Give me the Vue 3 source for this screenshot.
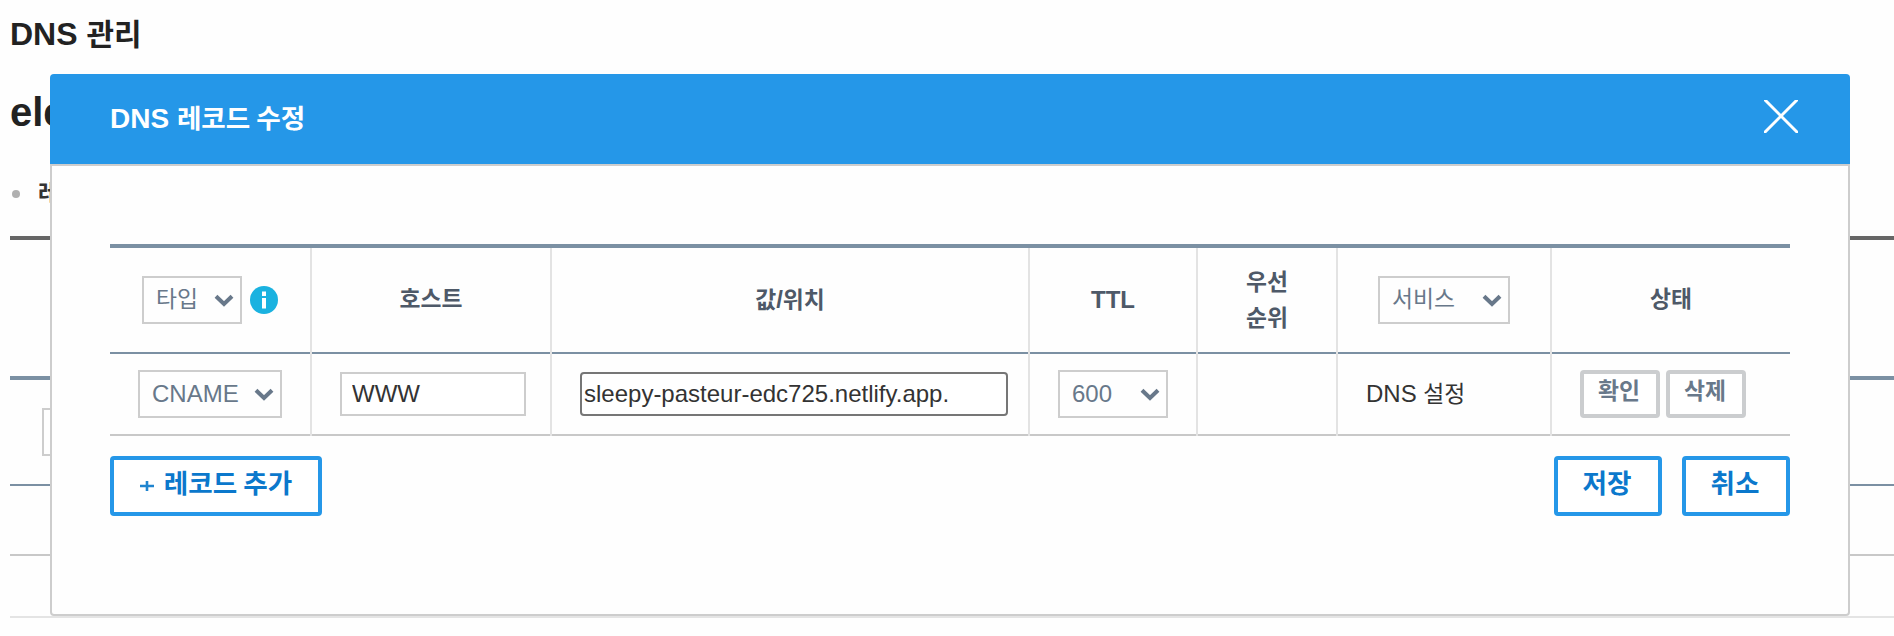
<script setup>
import { ref } from 'vue'

const host = ref('WWW')
const value = ref('sleepy-pasteur-edc725.netlify.app.')
</script>

<template>
  <div class="page">
    <div class="backdrop">
      <h1 class="page-title">DNS <span class="ko">관리</span></h1>
      <h2 class="domain">ele</h2>
      <p class="bullet"><i class="dot"></i><span class="ko">레</span></p>
      <div class="bg-head"></div>
      <div class="bg-filter"><span class="bg-box"></span></div>
      <div class="bg-row"></div>
      <div class="bg-row last"></div>
    </div>

    <section class="modal">
      <header class="modal-head">
        <h3>DNS <span class="ko">레코드 수정</span></h3>
        <svg class="close" width="34" height="33" viewBox="0 0 34 33">
          <path d="M0 -1L34 33M34 -1L0 33" stroke="#fff" stroke-width="3" fill="none" />
        </svg>
      </header>
      <div class="modal-body">
        <div class="table">
          <div class="row head">
            <div class="cell type">
              <div class="select s-type"><span class="ko">타입</span>
                <svg width="20" height="14" viewBox="0 0 20 14"><path d="M2 2.2L10 10L18 2.2" /></svg>
              </div>
              <svg class="info" width="28" height="28" viewBox="0 0 28 28">
                <circle cx="14" cy="14" r="14" fill="#1ab2e0" />
                <rect x="12" y="5.5" width="4" height="4.5" fill="#fff" />
                <rect x="12" y="12" width="4" height="10.5" fill="#fff" />
              </svg>
            </div>
            <div class="cell raised"><span class="ko">호스트</span></div>
            <div class="cell"><span><span class="ko">값</span>/<span class="ko">위치</span></span></div>
            <div class="cell">TTL</div>
            <div class="cell raised"><span class="ko two">우선<br />순위</span></div>
            <div class="cell">
              <div class="select s-service"><span class="ko">서비스</span>
                <svg width="20" height="14" viewBox="0 0 20 14"><path d="M2 2.2L10 10L18 2.2" /></svg>
              </div>
            </div>
            <div class="cell raised"><span class="ko">상태</span></div>
          </div>
          <div class="row body">
            <div class="cell">
              <div class="select s-record latin">CNAME
                <svg width="20" height="14" viewBox="0 0 20 14"><path d="M2 2.2L10 10L18 2.2" /></svg>
              </div>
            </div>
            <div class="cell field"><input v-model="host" class="in-host" /></div>
            <div class="cell field wide"><input v-model="value" class="in-value" /></div>
            <div class="cell">
              <div class="select s-ttl latin">600
                <svg width="20" height="14" viewBox="0 0 20 14"><path d="M2 2.2L10 10L18 2.2" /></svg>
              </div>
            </div>
            <div class="cell"></div>
            <div class="cell service"><span>DNS <span class="ko">설정</span></span></div>
            <div class="cell state">
              <button class="small"><span class="ko">확인</span></button>
              <button class="small"><span class="ko">삭제</span></button>
            </div>
          </div>
        </div>
        <div class="actions">
          <button class="big add">
            <svg width="14" height="11" viewBox="0 0 14 11"><path d="M0 5H14M7 0V10" stroke="#1f84cf" stroke-width="2.6" /></svg>
            <span class="ko">레코드 추가</span>
          </button>
          <button class="big"><span class="ko">저장</span></button>
          <button class="big"><span class="ko">취소</span></button>
        </div>
      </div>
    </section>
  </div>
</template>

<style>
body {
  background: #fefefe;
}
</style>

<style scoped>
.page {
  position: relative;
  height: 636px;
  overflow: hidden;
  background: #fefefe;
  font-family: "Liberation Sans", "Noto Sans CJK KR", sans-serif;
  font-size: 24px;
  color: #333;
}
.page * {
  box-sizing: border-box;
}
.ko {
  font-family: "Noto Sans CJK KR", sans-serif;
  font-size: 0.95em;
  line-height: 1;
}
h1, h2, h3, p {
  margin: 0;
  white-space: nowrap;
}
.backdrop {
  padding-left: 10px;
}
.page-title {
  height: 68px;
  font-size: 32px;
  line-height: 68px;
  color: #222;
}
.page-title .ko {
  font-size: 0.935em;
}
.domain {
  height: 88px;
  font-size: 40px;
  line-height: 88px;
  color: #222;
}
.bullet {
  display: flex;
  align-items: center;
  height: 80px;
  padding: 0 0 4px 2px;
  font-weight: 700;
}
.bullet .ko {
  margin-top: -4px;
}
.dot {
  width: 8px;
  height: 8px;
  margin-right: 18px;
  border-radius: 50%;
  background: #b0b0b0;
}
.bg-head {
  height: 144px;
  border-top: 4px solid #666;
  border-bottom: 4px solid #7b90a3;
}
.bg-filter {
  height: 106px;
  padding: 28px 0 0 32px;
  border-bottom: 2px solid #7b90a3;
}
.bg-box {
  display: block;
  width: 100px;
  height: 48px;
  border: 2px solid #cdcdcd;
}
.bg-row {
  height: 70px;
  border-bottom: 2px solid #c8c8c8;
}
.bg-row.last {
  height: 62px;
  border-color: #e4e4e4;
}
.modal {
  position: absolute;
  left: 50px;
  top: 74px;
  width: 1800px;
  height: 542px;
  border-radius: 4px;
  background: #fefefe;
}
.modal-head {
  display: flex;
  align-items: center;
  justify-content: space-between;
  height: 90px;
  padding: 0 52px 0 60px;
  border-radius: 4px 4px 0 0;
  background: #2597e8;
  color: #fff;
}
.modal-head h3 {
  font-size: 28px;
  line-height: 40px;
}
.close {
  margin-top: -5px;
}
.modal-body {
  height: 452px;
  padding: 78px 58px 0;
  border: 2px solid #cdcdcd;
  border-radius: 0 0 4px 4px;
}
.table {
  border-top: 4px solid #7b90a3;
}
.row {
  display: grid;
  grid-template-columns: 202px 240px 478px 168px 140px 214px 238px;
}
.cell {
  display: flex;
  align-items: center;
  justify-content: center;
  border-right: 2px solid #e3e3e3;
  white-space: nowrap;
}
.cell:last-child {
  border-right: 0;
}
.head .cell {
  height: 106px;
  padding-bottom: 2px;
  box-shadow: inset 0 -2px #7b90a3;
  font-weight: 700;
  color: #4e5968;
}
.head .cell.raised {
  padding-bottom: 5px;
}
.body .cell {
  height: 82px;
  padding-bottom: 2px;
  box-shadow: inset 0 -2px #c8c8c8;
}
.body .cell.field {
  padding-left: 4px;
}
.body .cell.wide {
  padding-left: 8px;
}
.two {
  line-height: 36px;
  text-align: center;
}
.type {
  gap: 8px;
}
.select {
  display: flex;
  align-items: center;
  justify-content: space-between;
  height: 48px;
  padding: 0 6px 3px 12px;
  border: 2px solid #cdcdcd;
  font-weight: 400;
  color: #68788a;
}
.select.latin {
  padding-bottom: 1px;
}
.select svg {
  margin-top: 4px;
}
.latin svg {
  margin-top: 2px;
}
.select path {
  fill: none;
  stroke: #68788a;
  stroke-width: 4;
}
.s-type { width: 100px; }
.s-service { width: 132px; }
.s-record { width: 144px; }
.s-ttl { width: 110px; }
input {
  height: 44px;
  font: 24px "Liberation Sans", sans-serif;
  color: #333;
  background: #fff;
  outline: none;
}
.in-host {
  width: 186px;
  padding: 0 10px;
  border: 2px solid #cdcdcd;
}
.in-value {
  width: 428px;
  padding: 0 2px;
  border: 2px solid #767676;
  border-radius: 4px;
}
.service.cell {
  justify-content: flex-start;
  padding-left: 28px;
}
.state {
  gap: 6px;
  padding-right: 16px;
}
button {
  display: flex;
  align-items: center;
  justify-content: center;
  padding: 0 2px 8px 0;
  background: #fff;
  font: 700 24px "Liberation Sans", sans-serif;
  white-space: nowrap;
}
.small {
  width: 80px;
  height: 48px;
  border: 4px solid #cbcdcf;
  border-radius: 4px;
  color: #68788a;
}
.actions {
  display: flex;
  gap: 20px;
  margin-top: 20px;
}
.big {
  width: 108px;
  height: 60px;
  border: 4px solid #2597e8;
  border-radius: 4px;
  font-size: 28px;
  color: #0b78cc;
}
.add {
  width: 212px;
  gap: 10px;
  margin-right: auto;
  padding-right: 0;
}
.add svg {
  margin-top: 8px;
}
</style>
